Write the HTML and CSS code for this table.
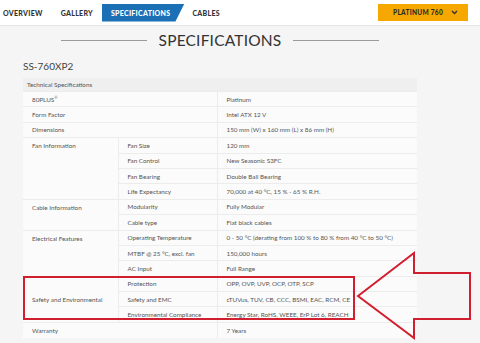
FILE: index.html
```html
<!DOCTYPE html>
<html lang="en">
<head>
<meta charset="UTF-8">
<title>Specifications</title>
<link rel="stylesheet" href="styles.css">
</head>
<body>
<div class="topbar">
  <ul class="tabs">
    <li class="tab">OVERVIEW</li>
    <li class="tab">GALLERY</li>
    <li class="tab active">SPECIFICATIONS</li>
    <li class="tab">CABLES</li>
  </ul>
  <div class="model-select">
    <span>PLATINUM 760</span>
    <svg width="7" height="5" viewBox="0 0 7 5"><path d="M1 1l2.5 2.5L6 1" fill="none" stroke="#333" stroke-width="1.3"/></svg>
  </div>
</div>

<div class="content">
  <h1 class="section-title"><span>SPECIFICATIONS</span></h1>
  <div class="model">SS-760XP2</div>

  <div class="table-wrap">
    <table class="spec">
      <colgroup>
        <col class="c1">
        <col class="c2">
        <col class="c3">
      </colgroup>
      <tr class="head"><td colspan="3">Technical Specifications</td></tr>
      <tr><td colspan="2">80PLUS<sup>®</sup></td><td>Platinum</td></tr>
      <tr><td colspan="2">Form Factor</td><td>Intel ATX 12 V</td></tr>
      <tr><td colspan="2">Dimensions</td><td>150 mm (W) x 160 mm (L) x 86 mm (H)</td></tr>
      <tr><td rowspan="4" class="group">Fan Information</td><td>Fan Size</td><td>120 mm</td></tr>
      <tr><td>Fan Control</td><td>New Seasonic S3FC</td></tr>
      <tr><td>Fan Bearing</td><td>Double Ball Bearing</td></tr>
      <tr><td>Life Expectancy</td><td>70,000 at 40 °C, 15 % - 65 % R.H.</td></tr>
      <tr><td rowspan="2" class="group">Cable Information</td><td>Modularity</td><td>Fully Modular</td></tr>
      <tr><td>Cable type</td><td>Flat black cables</td></tr>
      <tr><td rowspan="3" class="group">Electrical Features</td><td>Operating Temperature</td><td>0 - 50 °C (derating from 100 % to 80 % from 40 °C to 50 °C)</td></tr>
      <tr><td>MTBF @ 25 °C, excl. fan</td><td>150,000 hours</td></tr>
      <tr><td>AC Input</td><td>Full Range</td></tr>
      <tr><td rowspan="3" class="group mid">Safety and Environmental</td><td>Protection</td><td>OPP, OVP, UVP, OCP, OTP, SCP</td></tr>
      <tr><td>Safety and EMC</td><td>cTUVus, TUV, CB, CCC, BSMI, EAC, RCM, CE</td></tr>
      <tr><td>Environmental Compliance</td><td>Energy Star, RoHS, WEEE, ErP Lot 6, REACH</td></tr>
      <tr><td colspan="2">Warranty</td><td>7 Years</td></tr>
    </table>
    <div class="highlight"></div>
  </div>
</div>

<svg class="arrow" width="480" height="343" viewBox="0 0 480 343">
  <polygon points="358,296 414,253 414,273 470,273 470,319 414,319 414,338" fill="none" stroke="#d21f2f" stroke-width="2" stroke-linejoin="miter"/>
</svg>
</body>
</html>
```

FILE: styles.css
```css
body {
  margin: 0;
  background: #f5f5f5;
  font-family: Lato, "Open Sans", sans-serif;
  color: #555;
  width: 480px;
  height: 343px;
  overflow: hidden;
  position: relative;
}
.topbar {
  display: flex;
  justify-content: space-between;
  align-items: center;
  height: 26px;
  background: #fff;
  border-bottom: 1px solid #e6e6e6;
  box-sizing: border-box;
  padding: 0 12px 0 0;
}
.tabs {
  display: flex;
  list-style: none;
  margin: 0;
  padding: 0 0 0 3px;
  height: 18px;
  align-items: stretch;
}
.tab {
  display: flex;
  align-items: center;
  font-size: 7px;
  font-weight: 900;
  letter-spacing: 0.3px;
  color: #333;
  margin-right: 18px;
}
.tab.active {
  background: #1a6fb5;
  color: #fff;
  padding: 0 14px 0 9px;
  margin-left: -9px;
  margin-right: 8px;
  clip-path: polygon(0 0, 100% 0, calc(100% - 9px) 100%, 0 100%);
}
.model-select {
  display: flex;
  align-items: center;
  justify-content: space-between;
  width: 90px;
  height: 17px;
  box-sizing: border-box;
  padding: 0 10px 0 15px;
  background: #f6a800;
  font-size: 6.5px;
  font-weight: 900;
  letter-spacing: 0.3px;
  color: #2b2b2b;
}
.content {
  padding: 0 0 0 23px;
}
.section-title {
  display: flex;
  align-items: center;
  justify-content: center;
  gap: 12px;
  margin: 5px 0 0 0;
  width: 394px;
  font-size: 15.5px;
  font-weight: 400;
  letter-spacing: 0.2px;
  color: #333;
  height: 18px;
}
.section-title::before,
.section-title::after {
  content: "";
  width: 86px;
  height: 1px;
  background: #9a9a9a;
}
.model {
  margin: 11px 0 0 0;
  font-size: 10px;
  color: #444;
  height: 12px;
  line-height: 12px;
}
.table-wrap {
  position: relative;
  margin-top: 6px;
  width: 394px;
}
.spec {
  border-collapse: collapse;
  width: 394px;
  table-layout: fixed;
  font-size: 6.3px;
  background: #fbfbfb;
}
.spec col.c1 { width: 95px; }
.spec col.c2 { width: 99px; }
.spec col.c3 { width: 200px; }
.spec td {
  height: 15.4px;
  padding: 0 0 0 9px;
  border-top: 1px solid #ececec;
  box-sizing: border-box;
  white-space: nowrap;
  overflow: hidden;
  vertical-align: middle;
}
.spec td:nth-last-child(2) {
  border-right: 1px solid #ececec;
}
.spec td.group {
  border-right: 1px solid #ececec;
  vertical-align: top;
  padding-top: 4px;
}
.spec td.group.mid {
  vertical-align: middle;
  padding-top: 0;
}
.spec tr.head td {
  height: 13.5px;
  background: #efefef;
  border-top: 0;
  padding-left: 4px;
  color: #555;
}
.spec sup {
  font-size: 4px;
  line-height: 0;
}
.highlight {
  position: absolute;
  left: 0;
  top: 198px;
  width: 332px;
  height: 44px;
  border: 2px solid #d21f2f;
  box-sizing: border-box;
}
.arrow {
  position: absolute;
  left: 0;
  top: 0;
  pointer-events: none;
}
```
